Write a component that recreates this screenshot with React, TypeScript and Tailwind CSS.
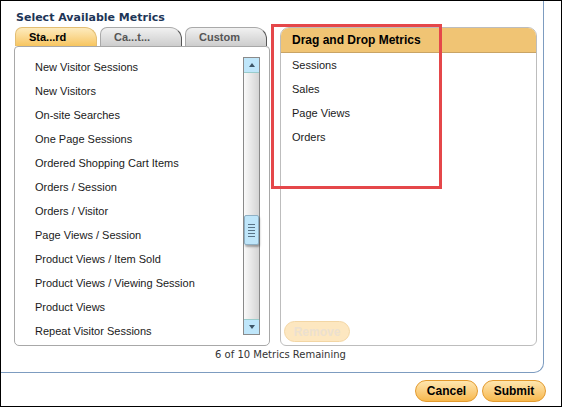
import React from 'react';

const available = [
  'New Visitor Sessions',
  'New Visitors',
  'On-site Searches',
  'One Page Sessions',
  'Ordered Shopping Cart Items',
  'Orders / Session',
  'Orders / Visitor',
  'Page Views / Session',
  'Product Views / Item Sold',
  'Product Views / Viewing Session',
  'Product Views',
  'Repeat Visitor Sessions',
];

const selected = ['Sessions', 'Sales', 'Page Views', 'Orders'];

const arial = "font-['Liberation_Sans',Arial,sans-serif]";
const verdana = "font-['DejaVu_Sans',Verdana,sans-serif]";

function Tab({ label, active }: { label: string; active?: boolean }) {
  return (
    <div
      className={
        'h-[19px] w-[82px] rounded-tl-[7px] rounded-tr-[12px] border border-b-0 text-[11px] font-bold leading-[18px] pl-[13px] ' +
        arial +
        (active
          ? ' bg-gradient-to-b from-[#fdebbd] to-[#f7c55e] border-[#e3be74] text-black'
          : ' bg-gradient-to-b from-[#f1f1f1] to-[#cdcdcd] border-[#a9a9a9] border-r-[#555] text-[#555]')
      }
    >
      {label}
    </div>
  );
}

function Scrollbar() {
  return (
    <div className="my-[10px] mr-[9px] flex w-[17px] flex-col border border-[#8a8a8a]">
      <div className="flex h-[15px] items-center justify-center bg-[#bfe6fa] border-b border-[#9cc]">
        <div className="h-0 w-0 border-x-[3px] border-b-[4px] border-x-transparent border-b-[#3d5566]" />
      </div>
      <div className="flex flex-1 flex-col bg-gradient-to-r from-[#fafafa] to-[#d4d4d4]">
        <div className="h-[142px]" />
        <div className="flex h-[30px] flex-col items-center justify-center gap-[2px] rounded-[2px] border border-[#8fb0c4] bg-[#bfe6fa] shadow-[1px_2px_2px_rgba(0,0,0,0.3)]">
          {[0, 1, 2, 3, 4].map((i) => (
            <div key={i} className="h-px w-[7px] bg-[#587386]" />
          ))}
        </div>
        <div className="flex-1" />
      </div>
      <div className="flex h-[15px] items-center justify-center bg-[#bfe6fa] border-t border-[#9cc]">
        <div className="h-0 w-0 border-x-[3px] border-t-[4px] border-x-transparent border-t-[#3d5566]" />
      </div>
    </div>
  );
}

export default function App() {
  return (
    <div className="relative h-[407px] w-[562px] overflow-hidden border border-black bg-white">
      <div className="h-[372px] w-[543px] rounded-br-[10px] border-b border-r border-[#7d9cc0] pl-[13px] pt-[9px]">
        <div className={'h-[16px] text-[11px] font-bold leading-[16px] text-[#1d3557] pl-[2px] ' + verdana}>
          Select Available Metrics
        </div>
        <div className="mt-[1px] flex gap-[10px]">
          <div className="flex w-[256px] flex-col">
            <div className="ml-[1px] flex gap-[3px]">
              <Tab label="Sta...rd" active />
              <Tab label="Ca...t..." />
              <Tab label="Custom" />
            </div>
            <div className="flex h-[300px] overflow-hidden rounded-[5px] rounded-t-[4px] border border-[#a8a8a8] bg-white">
              <ul className={'flex-1 overflow-hidden pl-[20px] pt-[8px] text-[11px] leading-[24px] text-[#1a1a1a] ' + arial}>
                {available.map((m) => (
                  <li key={m}>{m}</li>
                ))}
              </ul>
              <Scrollbar />
            </div>
          </div>
          <div className="flex h-[319px] w-[257px] flex-col overflow-hidden rounded-t-[9px] rounded-b-[6px] border border-[#bdbdbd] bg-white">
            <div className={'h-[25px] border-b border-[#c9a465] bg-[#f0c474] pl-[11px] text-[12px] font-bold leading-[25px] text-black ' + arial}>
              Drag and Drop Metrics
            </div>
            <ul className={'flex-1 pl-[11px] text-[11px] leading-[24px] text-[#1a1a1a] ' + arial}>
              {selected.map((m) => (
                <li key={m}>{m}</li>
              ))}
            </ul>
            <div className="mb-[3px] ml-[3px]">
              <button
                disabled
                className={'h-[21px] w-[66px] rounded-full border border-[#f3d6a4] bg-[#fde7c0] text-[12px] font-bold text-[#ece0cf] ' + arial}
              >
                Remove
              </button>
            </div>
          </div>
        </div>
        <div className={'ml-[6px] mt-[2px] w-[521px] text-center text-[10px] leading-[14px] text-[#333] ' + verdana}>
          6 of 10 Metrics Remaining
        </div>
      </div>
      <div className="mr-[15px] mt-[7px] flex justify-end gap-[4px]">
        <button className={'h-[22px] w-[63px] rounded-full border border-[#e39a2e] bg-gradient-to-b from-[#fee6ae] to-[#f7b84a] text-[12px] font-bold text-black ' + arial}>
          Cancel
        </button>
        <button className={'h-[22px] w-[64px] rounded-full border border-[#e39a2e] bg-gradient-to-b from-[#fee6ae] to-[#f7b84a] text-[12px] font-bold text-black ' + arial}>
          Submit
        </button>
      </div>
      <div className="absolute left-[270px] top-[23px] h-[165px] w-[171px] border-[3px] border-[#e5474a]" />
    </div>
  );
}
